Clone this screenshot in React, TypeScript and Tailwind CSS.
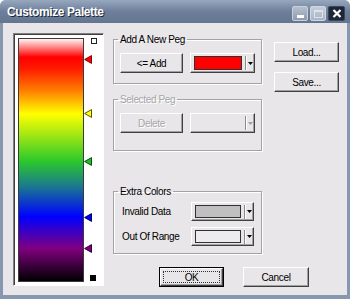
import React from "react";

const raised =
  "bg-[#e8e6e8] border border-t-white border-l-white border-r-[#404040] border-b-[#404040] shadow-[inset_-1px_-1px_0_#a0a0a0]";

const groupBox =
  "border border-[#a3a3a3] shadow-[inset_1px_1px_0_#fff,1px_1px_0_#fff] min-w-0";

function Btn({
  children,
  className = "",
  disabled = false,
}: {
  children: React.ReactNode;
  className?: string;
  disabled?: boolean;
}) {
  return (
    <div
      className={`${raised} h-[20px] flex items-center justify-center ${
        disabled ? "text-[#a6a6a6] [text-shadow:1px_1px_0_#fff]" : "text-black"
      } ${className}`}
    >
      {children}
    </div>
  );
}

function Arrow({ disabled = false }: { disabled?: boolean }) {
  return (
    <div className="w-[8px] flex justify-center">
      <svg width="5" height="3" viewBox="0 0 5 3">
        <polygon points="0,0 5,0 2.5,3" fill={disabled ? "#a0a0a0" : "#000"} />
      </svg>
    </div>
  );
}

function ColorDrop({
  swatch,
  className = "",
  disabled = false,
}: {
  swatch?: string;
  className?: string;
  disabled?: boolean;
}) {
  return (
    <div className={`${raised} flex items-center ${className}`}>
      <div className="flex-1 h-full py-[2px] pl-[3px] pr-[3px]">
        {swatch && <div className={`h-full border border-[#303030] ${swatch}`} />}
      </div>
      <div className="w-px h-[14px] bg-[#8a8a8a] shadow-[1px_0_0_#fff]" />
      <Arrow disabled={disabled} />
    </div>
  );
}

function Peg({ top, fill, stroke }: { top: string; fill: string; stroke: string }) {
  return (
    <svg className={`absolute left-0 ${top}`} width="8" height="9" viewBox="0 0 8 9">
      <polygon points="0.6,4.5 7.5,0.6 7.5,8.4" fill={fill} stroke={stroke} strokeWidth="1" />
    </svg>
  );
}

function Palette() {
  return (
    <div className="w-[91px] h-[253px] flex items-start pt-[4px] pl-[4px] bg-white border border-t-[#808080] border-l-[#808080] border-r-white border-b-white shadow-[inset_1px_1px_0_#404040]">
      <div className="w-[66px] h-[244px] border border-[#3a3a3a] bg-[linear-gradient(to_bottom,#fff4f4_0%,#ff0000_7.5%,#ff1800_12%,#ff7a00_21%,#ffff00_31%,#2cc82c_50.5%,#1a7890_61%,#0000ff_73.5%,#800080_86.5%,#000000_100%)]" />
      <div className="relative w-[14px] h-[244px]">
        <div className="absolute left-[7px] top-0 w-[6px] h-[6px] bg-white border border-[#202020]" />
        <Peg top="top-[17px]" fill="#ff0000" stroke="#8a0000" />
        <Peg top="top-[71px]" fill="#ffff00" stroke="#555500" />
        <Peg top="top-[119px]" fill="#22c022" stroke="#0a500a" />
        <Peg top="top-[175px]" fill="#0000ff" stroke="#000060" />
        <Peg top="top-[206px]" fill="#800080" stroke="#300030" />
        <div className="absolute left-[6px] top-[237px] w-[6px] h-[6px] bg-black" />
      </div>
    </div>
  );
}

export default function App() {
  return (
    <div className="w-[350px] h-[299px] bg-[#8797b0] rounded-t-[6px] flex flex-col overflow-hidden font-['Liberation_Sans',Arial,sans-serif] text-[10px] tracking-[-0.35px] text-black">
      {/* Title bar */}
      <div className="h-[23px] flex items-center pl-[7px] pr-[5px] bg-gradient-to-b from-[#97a7be] via-[#6d7f9a] to-[#63758f]">
        <span className="flex-1 text-white font-bold text-[12px] tracking-[-0.4px] [text-shadow:1px_1px_0_#1c2636]">
          Customize Palette
        </span>
        <div className="flex gap-[2px] mt-[4px]">
          <div className="w-[16px] h-[15px] rounded-[2px] border border-[#c8d0dc] bg-gradient-to-b from-[#b5bfcd] to-[#8e9cb0] flex items-end justify-center pb-[2px]">
            <div className="w-[7px] h-[3px] bg-white" />
          </div>
          <div className="w-[16px] h-[15px] rounded-[2px] border border-[#d0d7e1] bg-gradient-to-b from-[#c4cdd9] to-[#a9b5c6] flex items-center justify-center">
            <div className="w-[9px] h-[8px] border border-[#dde3ea] border-t-2" />
          </div>
          <div className="w-[17px] h-[15px] rounded-[2px] border border-[#3a465a] bg-[#1d2738] flex items-center justify-center">
            <svg width="10" height="9" viewBox="0 0 10 9">
              <path d="M1.5 1 L8.5 8 M8.5 1 L1.5 8" stroke="#fff" strokeWidth="2.2" />
            </svg>
          </div>
        </div>
      </div>

      {/* Client area */}
      <div className="flex-1 mx-[3px] mb-[4px] bg-[#e8e6e8] flex items-start pl-[10px] pt-[10px]">
        <Palette />

        <div className="ml-[9px] flex flex-col">
          <div className="flex items-start">
            <div className="w-[149px] flex flex-col">
              <fieldset className={`${groupBox} h-[51px] px-[6px] pt-[7px]`}>
                <legend className="-ml-[2px] px-[2px] leading-[13px]">Add A New Peg</legend>
                <div className="flex gap-[7px]">
                  <Btn className="w-[64px]">&lt;= Add</Btn>
                  <ColorDrop className="w-[66px] h-[20px]" swatch="bg-[#ff0000]" />
                </div>
              </fieldset>

              <fieldset className={`${groupBox} mt-[9px] h-[58px] px-[6px] pt-[7px]`}>
                <legend className="-ml-[2px] px-[2px] leading-[13px] text-[#a6a6a6] [text-shadow:1px_1px_0_#fff]">
                  Selected Peg
                </legend>
                <div className="flex gap-[7px]">
                  <Btn className="w-[64px]" disabled>
                    Delete
                  </Btn>
                  <ColorDrop className="w-[66px] h-[20px]" disabled />
                </div>
              </fieldset>

              <fieldset className={`${groupBox} mt-[34px] h-[69px] pl-[8px] pt-[4px]`}>
                <legend className="-ml-[4px] px-[2px] leading-[13px]">Extra Colors</legend>
                <div className="flex flex-col gap-[6px]">
                  <div className="flex items-center">
                    <span className="w-[69px]">Invalid Data</span>
                    <ColorDrop className="w-[63px] h-[19px]" swatch="bg-[#c0c0c0]" />
                  </div>
                  <div className="flex items-center">
                    <span className="w-[69px]">Out Of Range</span>
                    <ColorDrop className="w-[63px] h-[19px]" swatch="bg-[#ecebee]" />
                  </div>
                </div>
              </fieldset>
            </div>

            <div className="ml-[12px] pt-[9px] flex flex-col gap-[10px]">
              <Btn className="w-[65px]">Load...</Btn>
              <Btn className="w-[65px]">Save...</Btn>
            </div>
          </div>

          <div className="flex ml-[46px] mt-[13px]">
            <div className="w-[65px] h-[20px] border border-black">
              <div className={`${raised} h-full flex items-center justify-center p-[2px]`}>
                <div className="w-full h-full border border-dotted border-[#303030] flex items-center justify-center">
                  OK
                </div>
              </div>
            </div>
            <Btn className="w-[66px] ml-[19px]">Cancel</Btn>
          </div>
        </div>
      </div>
    </div>
  );
}
